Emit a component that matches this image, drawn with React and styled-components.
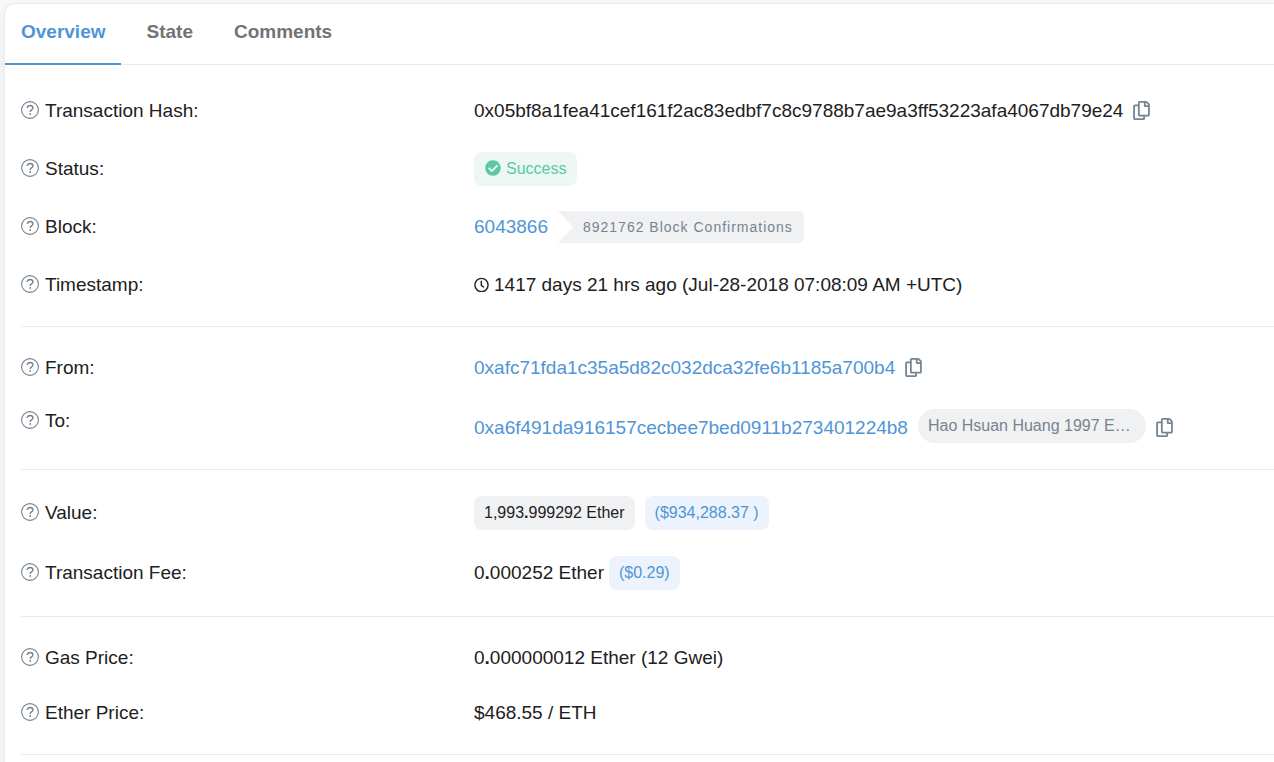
import React from 'react';
import styled, { createGlobalStyle } from 'styled-components';
import { FaCheckCircle } from 'react-icons/fa';

const GlobalStyle = createGlobalStyle`
    * {
        box-sizing: border-box;
    }
    body {
        margin: 0;
        background-color: #f8f9fa;
        color: #1e2022;
        font-family: "Liberation Sans", Arial, sans-serif;
        font-size: 19px;
        line-height: 24px;
    }
    svg {
        flex: none;
        margin-bottom: 2px;
    }
`

const Page = styled.main`
    padding: 3px 0 0 4px;
    overflow: hidden;
`

const Card = styled.div`
    min-height: calc(100vh - 3px);
    background-color: #fff;
    border: 1px solid #e7eaf3;
    border-right: none;
    border-bottom: none;
    border-radius: 10px 0 0 0;
    box-shadow: 0 8px 19px rgba(189, 197, 209, 0.25);
`

const Tabs = styled.nav`
    display: flex;
    gap: 10px;
    border-bottom: 1px solid #e7eaf3;
`

const Tab = styled.button`
    margin: 0 0 -1px;
    padding: 16px 15px 19px 16px;
    border: none;
    border-bottom: 2px solid ${({ $active }) => $active ? '#4f95d6' : 'transparent'};
    background: none;
    color: ${({ $active }) => $active ? '#4f95d6' : '#6f7278'};
    font: inherit;
    font-weight: bold;
    cursor: pointer;
`

const Content = styled.div`
    padding: 5px 0 0 16px;
`

const Section = styled.dl`
    display: flex;
    flex-direction: column;
    gap: ${({ $gap }) => $gap}px;
    margin: 0;
    padding: ${({ $pad }) => $pad}px 0;
    border-bottom: 1px solid #e7eaf3;
`

const Row = styled.div`
    display: grid;
    grid-template-columns: minmax(0, 453fr) minmax(0, 800fr);
    align-items: ${({ $top }) => $top ? 'start' : 'center'};
`

const Label = styled.dt`
    display: flex;
    align-items: center;
    gap: 6px;
`

const Value = styled.dd`
    display: flex;
    align-items: ${({ $end }) => $end ? 'flex-end' : 'center'};
    gap: ${({ $gap }) => $gap || 10}px;
    min-height: ${({ $end }) => $end ? 36 : 34}px;
    margin: 0;
    white-space: nowrap;
`

const Link = styled.a`
    color: #4f95d6;
    line-height: 34px;
    text-decoration: none;
`

const tones = {
    success: ['#edf8f5', '#5ac8a5'],
    dark: ['#f0f1f3', '#1e2022'],
    info: ['#ecf3fc', '#4f95d6'],
}

const Badge = styled.span`
    display: inline-flex;
    align-items: center;
    gap: 5px;
    height: 34px;
    padding: 0 ${({ $tone }) => $tone === 'success' ? 11 : 10}px;
    border-radius: 8px;
    background-color: ${({ $tone }) => tones[$tone][0]};
    color: ${({ $tone }) => tones[$tone][1]};
    font-size: 16px;
    white-space: pre;
`

const Confirmations = styled.span`
    height: 32px;
    padding: 0 11px 0 25px;
    border-radius: 0 5px 5px 0;
    background-color: #f0f1f3;
    clip-path: polygon(0 0, 100% 0, 100% 100%, 0 100%, 15px 50%);
    color: #77838f;
    font-size: 14px;
    line-height: 32px;
    letter-spacing: 1px;
`

const NameTag = styled.span`
    align-self: flex-start;
    width: 228px;
    padding: 0 10px;
    border-radius: 17px;
    background-color: #f0f1f3;
    color: #77838f;
    font-size: 16px;
    line-height: 34px;
    overflow: hidden;
    text-overflow: ellipsis;
`

const IconButton = styled.button`
    display: flex;
    align-items: center;
    height: 34px;
    padding: 0;
    border: none;
    background: none;
    color: #77838f;
    cursor: pointer;
`

const HelpIcon = () => (
    <svg width="18" height="18" viewBox="0 0 18 18" fill="none" stroke="#77838f" aria-hidden="true">
        <circle cx="9" cy="9" r="8.4" strokeWidth="1.1" />
        <path d="M6.2 6.9C6.5 5.3 7.6 4.5 9.1 4.5c1.6 0 2.8 1 2.8 2.4 0 2-2.7 2-2.7 3.8v.3" strokeWidth="1.4" />
        <circle cx="9.2" cy="13" r=".9" fill="#77838f" stroke="none" />
    </svg>
)

const CopyIcon = () => (
    <svg width="17" height="19" viewBox="0 0 448 512" fill="currentColor" aria-hidden="true">
        <path d="M433.9 65.9l-51.8-51.8A48 48 0 0 0 348.1 0H176c-26.5 0-48 21.5-48 48v48H48c-26.5 0-48 21.5-48 48v320c0 26.5 21.5 48 48 48h224c26.5 0 48-21.5 48-48v-48h80c26.5 0 48-21.5 48-48V99.9a48 48 0 0 0-14.1-34zM266 464H54a6 6 0 0 1-6-6V150a6 6 0 0 1 6-6h74v224c0 26.5 21.5 48 48 48h96v42a6 6 0 0 1-6 6zm128-96H182a6 6 0 0 1-6-6V54a6 6 0 0 1 6-6h106v88c0 13.3 10.7 24 24 24h88v202a6 6 0 0 1-6 6zm6-256h-64V48h9.6c1.6 0 3.1.6 4.2 1.8l48.4 48.4a6 6 0 0 1 1.8 4.2V112z" />
    </svg>
)

const ClockIcon = () => (
    <svg width="15" height="15" viewBox="0 0 15 15" fill="none" stroke="currentColor" strokeWidth="1.4" strokeLinecap="round" aria-hidden="true">
        <circle cx="7.5" cy="8" r="6.6" />
        <path d="M7.3 4.3v4l2.2 1.7" />
    </svg>
)

const Copy = () => (
    <IconButton type="button" aria-label="Copy">
        <CopyIcon />
    </IconButton>
)

const Field = ({ label, top, end, gap, children }) => (
    <Row $top={top}>
        <Label><HelpIcon />{label}:</Label>
        <Value $end={end} $gap={gap}>{children}</Value>
    </Row>
)

const App = () => (
    <>
        <GlobalStyle />
        <Page>
            <Card>
                <Tabs>
                    <Tab type="button" $active>Overview</Tab>
                    <Tab type="button">State</Tab>
                    <Tab type="button">Comments</Tab>
                </Tabs>
                <Content>
                    <Section $gap={24} $pad={24}>
                        <Field label="Transaction Hash">
                            <span>0x05bf8a1fea41cef161f2ac83edbf7c8c9788b7ae9a3ff53223afa4067db79e24</span>
                            <Copy />
                        </Field>
                        <Field label="Status">
                            <Badge $tone="success"><FaCheckCircle />Success</Badge>
                        </Field>
                        <Field label="Block">
                            <Link href="#block">6043866</Link>
                            <Confirmations>8921762 Block Confirmations</Confirmations>
                        </Field>
                        <Field label="Timestamp" gap={5}>
                            <ClockIcon />
                            <span>1417 days 21 hrs ago (Jul-28-2018 07:08:09 AM +UTC)</span>
                        </Field>
                    </Section>
                    <Section $gap={24} $pad={24}>
                        <Field label="From">
                            <Link href="#from">0xafc71fda1c35a5d82c032dca32fe6b1185a700b4</Link>
                            <Copy />
                        </Field>
                        <Field label="To" top end>
                            <Link href="#to">0xa6f491da916157cecbee7bed0911b273401224b8</Link>
                            <NameTag>Hao Hsuan Huang 1997 E…</NameTag>
                            <Copy />
                        </Field>
                    </Section>
                    <Section $gap={26} $pad={26}>
                        <Field label="Value">
                            <Badge $tone="dark"><span>1,993<b>.</b>999292 Ether</span></Badge>
                            <Badge $tone="info">($934,288.37 )</Badge>
                        </Field>
                        <Field label="Transaction Fee" gap={5}>
                            <span>0<b>.</b>000252 Ether</span>
                            <Badge $tone="info">($0.29)</Badge>
                        </Field>
                    </Section>
                    <Section $gap={21} $pad={24}>
                        <Field label="Gas Price">
                            <span>0<b>.</b>000000012 Ether (12 Gwei)</span>
                        </Field>
                        <Field label="Ether Price">$468.55 / ETH</Field>
                    </Section>
                </Content>
            </Card>
        </Page>
    </>
)

export default App;
